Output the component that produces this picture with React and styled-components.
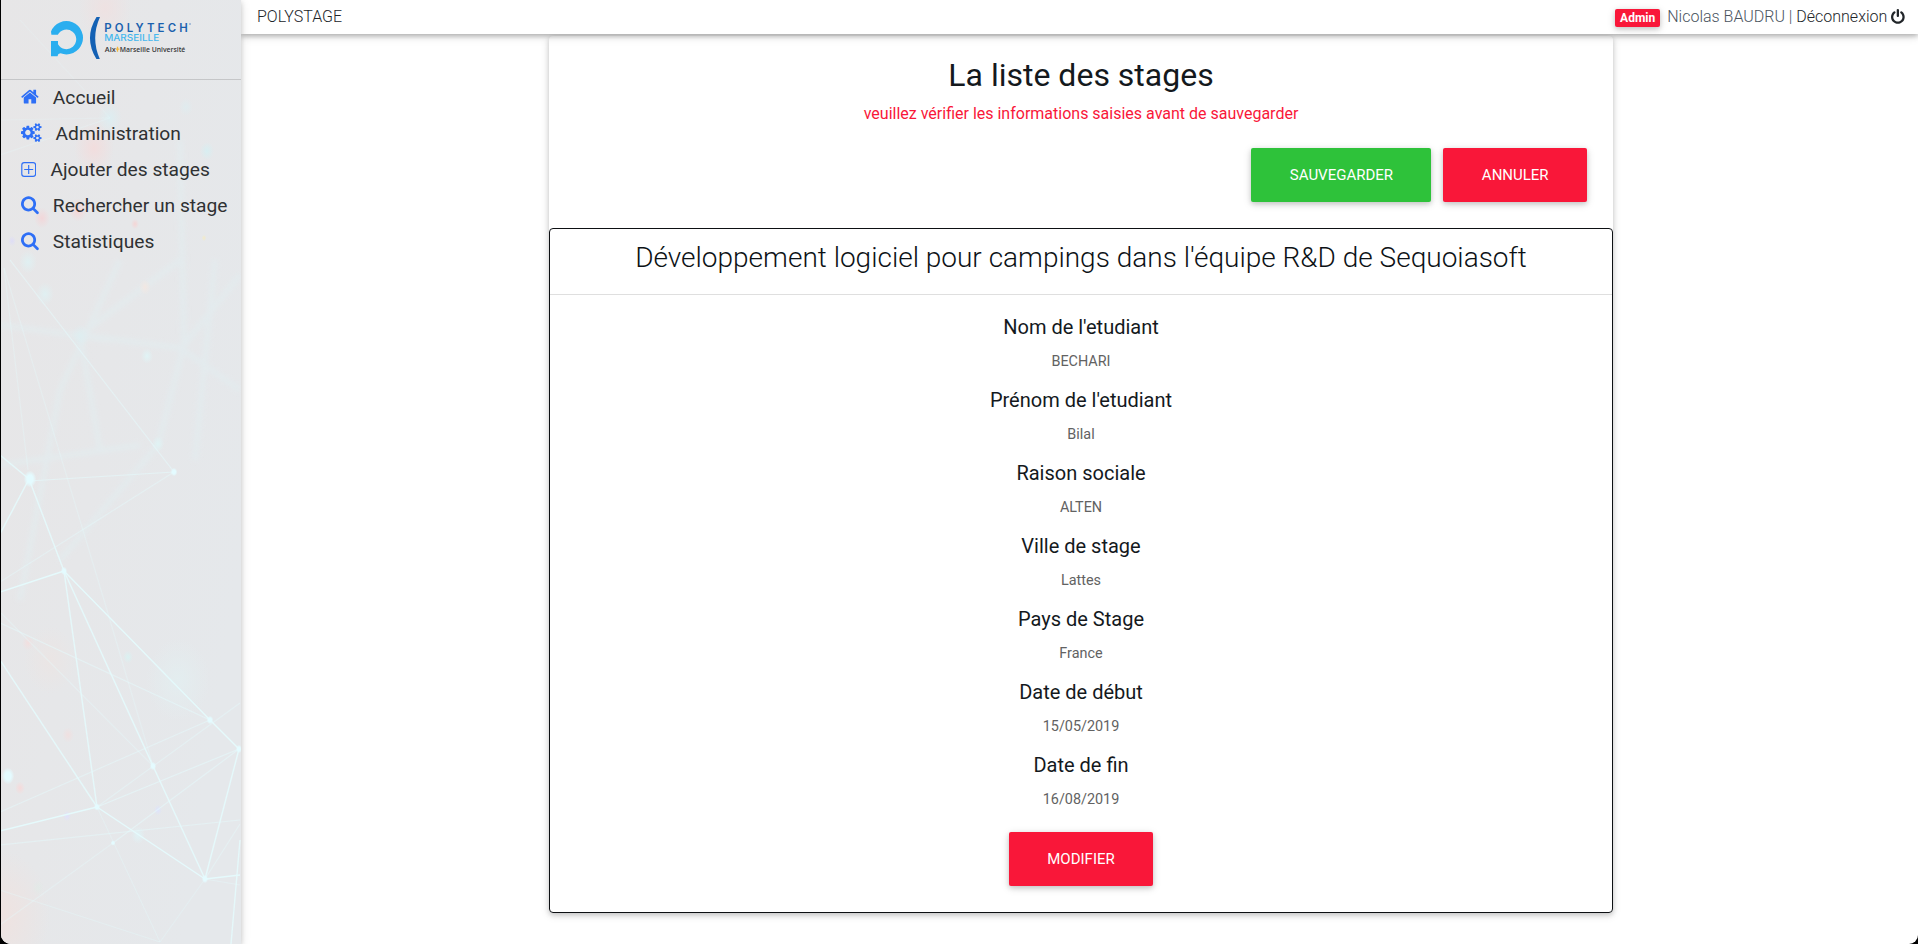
import React from "react";
import styled, { createGlobalStyle } from "styled-components";

const GlobalStyle = createGlobalStyle`
  *, *::before, *::after { box-sizing: border-box; }
  body {
    margin: 0;
    background: #000;
    font-family: Roboto, "Liberation Sans", sans-serif;
    font-weight: 300;
    color: #212529;
    overflow: hidden;
  }
`;

const Window = styled.div`
  display: flex;
  height: 944px;
  margin-left: 1px;
  background: #fff;
  border-radius: 0 0 9px 10px;
  overflow: hidden;
`;

const Sidebar = styled.aside`
  position: relative;
  z-index: 2;
  flex: 0 0 240px;
  background: #e6e7e9;
  box-shadow: 0 2px 5px rgba(0, 0, 0, 0.16), 0 2px 10px rgba(0, 0, 0, 0.12);
`;

const Backdrop = styled.svg`
  position: absolute;
  inset: 0;
  display: block;
`;

const LogoArea = styled.div`
  position: relative;
  height: 80px;
  padding: 17px 0 0 50px;
  border-bottom: 1px solid #c5c6c8;
`;

const Nav = styled.nav`
  position: relative;
  display: flex;
  flex-direction: column;
  margin-top: -1px;
`;

const NavItem = styled.a`
  display: flex;
  align-items: center;
  gap: 14px;
  height: 36px;
  padding-left: 20px;
  font-size: 19.2px;
  font-weight: 400;
  color: #2f3133;
  white-space: nowrap;
  svg { color: #2e6ff6; flex: none; }
`;

const Main = styled.div`
  flex: 1;
  display: flex;
  flex-direction: column;
  min-width: 0;
`;

const TopBar = styled.header`
  position: relative;
  z-index: 1;
  display: flex;
  flex: 0 0 34px;
  align-items: center;
  justify-content: space-between;
  padding: 0 13px 1px 16px;
  background: #fff;
  font-size: 16px;
  box-shadow: 0 2px 5px rgba(0, 0, 0, 0.26), 0 2px 10px rgba(0, 0, 0, 0.12);
`;

const Account = styled.div`
  display: flex;
  align-items: center;
  color: #4a545e;
  white-space: pre;
  svg { margin-left: 4px; color: #212529; }
`;

const Badge = styled.span`
  height: 18px;
  margin: 3px 7px 0 0;
  padding: 0 5px;
  border-radius: 2px;
  background: #f91739;
  color: #fff;
  font-size: 12px;
  font-weight: 700;
  line-height: 18px;
  box-shadow: 0 2px 5px rgba(0, 0, 0, 0.16), 0 2px 10px rgba(0, 0, 0, 0.12);
`;

const Logout = styled.a`
  color: #212529;
`;

const Card = styled.section`
  width: 1064px;
  margin: 2px 0 0 308px;
  border-radius: 4px;
  background: #fff;
  text-align: center;
  box-shadow: 0 2px 5px rgba(0, 0, 0, 0.16), 0 2px 10px rgba(0, 0, 0, 0.12);
`;

const Intro = styled.div`
  height: 192px;
  padding: 20px 20px 0;
`;

const Title = styled.h2`
  margin: 0 0 8px;
  font-size: 32px;
  font-weight: 400;
  line-height: 38px;
  color: #14191d;
`;

const Warning = styled.p`
  margin: 0;
  font-size: 16px;
  font-weight: 400;
  line-height: 24px;
  color: #f91739;
`;

const Actions = styled.div`
  display: flex;
  justify-content: flex-end;
  gap: 12px;
  padding: 22px 6px 0 0;
`;

const Button = styled.button`
  height: 54px;
  padding: 0 38.4px;
  border: 0;
  border-radius: 2px;
  background: ${(p) => (p.$tone === "success" ? "#2ec23a" : "#f91739")};
  color: #fff;
  font: 400 15px/22px Roboto, "Liberation Sans", sans-serif;
  text-transform: uppercase;
  box-shadow: 0 2px 5px rgba(0, 0, 0, 0.16), 0 2px 10px rgba(0, 0, 0, 0.12);
`;

const Internship = styled.article`
  height: 685px;
  border: 1px solid #0d1013;
  border-radius: 4px;
`;

const InternshipTitle = styled.h3`
  height: 66px;
  margin: 0 0 20px;
  padding-top: 12px;
  border-bottom: 1px solid #dfdfdf;
  font-size: 28px;
  font-weight: 300;
  line-height: 34px;
  color: #0d1216;
`;

const Fields = styled.dl`
  margin: 0;
  padding-bottom: 6px;
`;

const Label = styled.dt`
  margin-bottom: 8px;
  font-size: 20px;
  font-weight: 400;
  line-height: 24px;
  color: #14191d;
`;

const Value = styled.dd`
  margin: 0 0 11px;
  font-size: 14.4px;
  font-weight: 400;
  line-height: 30px;
  color: #626262;
`;

const FA = {
  home: {
    x: 64, w: 1664,
    d: "M1472 992v480q0 26-19 45t-45 19h-384v-384h-256v384h-384q-26 0-45-19t-19-45v-480q0-1 .5-3t.5-3l575-474 575 474q1 2 1 6zm223-69l-62 74q-8 9-21 11h-3q-13 0-21-7l-692-577-692 577q-12 8-24 7-13-2-21-11l-62-74q-8-10-7-23.5t11-21.5l719-599q32-26 76-26t76 26l244 204v-195q0-14 9-23t23-9h192q14 0 23 9t9 23v408l219 182q10 8 11 21.5t-7 23.5z",
  },
  cogs: {
    x: -64, w: 1920,
    d: "M832 896q0-106-75-181t-181-75-181 75-75 181 75 181 181 75 181-75 75-181zm768 512q0-52-38-90t-90-38-90 38-38 90q0 53 37.5 90.5t90.5 37.5 90.5-37.5 37.5-90.5zm0-1024q0-52-38-90t-90-38-90 38-38 90q0 53 37.5 90.5t90.5 37.5 90.5-37.5 37.5-90.5zm-384 421v185q0 10-7 19.5t-16 10.5l-155 24q-11 35-32 76 34 48 90 115 7 11 7 20 0 12-7 19-23 30-82.5 89.5t-78.5 59.5q-11 0-21-7l-115-90q-37 19-77 31-11 108-23 155-7 24-30 24h-186q-11 0-20-7.5t-10-17.5l-23-153q-34-10-75-31l-118 89q-7 7-20 7-11 0-21-8-144-133-144-160 0-9 7-19 10-14 41-53t47-61q-23-44-35-82l-152-24q-10-1-17-9.5t-7-19.5v-185q0-10 7-19.5t16-10.5l155-24q11-35 32-76-34-48-90-115-7-11-7-20 0-12 7-20 22-30 82-89t79-59q11 0 21 7l115 90q34-18 77-32 11-108 23-154 7-24 30-24h186q11 0 20 7.5t10 17.5l23 153q34 10 75 31l118-89q8-7 20-7 11 0 21 8 144 133 144 160 0 8-7 19-12 16-42 54t-45 60q23 48 34 82l152 23q10 2 17 10.5t7 19.5zm640 533v140q0 16-149 31-12 27-30 52 51 113 51 138 0 4-4 7-122 71-124 71-8 0-46-47t-52-68q-20 2-30 2t-30-2q-14 21-52 68t-46 47q-2 0-124-71-4-3-4-7 0-25 51-138-18-25-30-52-149-15-149-31v-140q0-16 149-31 13-29 30-52-51-113-51-138 0-4 4-7 4-2 35-20t59-34 30-16q8 0 46 46.5t52 67.5q20-2 30-2t30 2q51-71 92-112l6-2q4 0 124 70 4 3 4 7 0 25-51 138 17 23 30 52 149 15 149 31zm0-1024v140q0 16-149 31-12 27-30 52 51 113 51 138 0 4-4 7-122 71-124 71-8 0-46-47t-52-68q-20 2-30 2t-30-2q-14 21-52 68t-46 47q-2 0-124-71-4-3-4-7 0-25 51-138-18-25-30-52-149-15-149-31v-140q0-16 149-31 13-29 30-52-51-113-51-138 0-4 4-7 4-2 35-20t59-34 30-16q8 0 46 46.5t52 67.5q20-2 30-2t30 2q51-71 92-112l6-2q4 0 124 70 4 3 4 7 0 25-51 138 17 23 30 52 149 15 149 31z",
  },
  search: {
    x: 64, w: 1664,
    d: "M1216 832q0-185-131.5-316.5t-316.5-131.5-316.5 131.5-131.5 316.5 131.5 316.5 316.5 131.5 316.5-131.5 131.5-316.5zm512 832q0 52-38 90t-90 38q-54 0-90-38l-343-342q-179 124-399 124-143 0-273.5-55.5t-225-150-150-225-55.5-273.5 55.5-273.5 150-225 225-150 273.5-55.5 273.5 55.5 225 150 150 225 55.5 273.5q0 220-124 399l343 343q37 37 37 90z",
  },
  power: {
    x: 128, w: 1536,
    d: "M1664 896q0 156-61 298t-164 245-245 164-298 61-298-61-245-164-164-245-61-298q0-182 80.5-343t226.5-270q43-32 95.5-25t83.5 50q32 42 24.5 94.5t-49.5 84.5q-98 74-151.5 181t-53.5 228q0 104 40.5 198.5t109.5 163.5 163.5 109.5 198.5 40.5 198.5-40.5 163.5-109.5 109.5-163.5 40.5-198.5q0-121-53.5-228t-151.5-181q-42-32-49.5-84.5t24.5-94.5q31-43 84-50t95 25q146 109 226.5 270t80.5 343zm-640-768v640q0 52-38 90t-90 38-90-38-38-90v-640q0-52 38-90t90-38 90 38 38 90z",
  },
};

function Icon({ name, size = 19.2 }) {
  if (name === "plus") {
    return (
      <svg width="15.4" height="15" viewBox="0 0 15 15" fill="none" stroke="currentColor" strokeWidth="1.15">
        <rect x="0.6" y="0.6" width="13.8" height="13.8" rx="2.4" />
        <path d="M7.5 3v9M3 7.5h9" />
      </svg>
    );
  }
  const { x, w, d } = FA[name];
  return (
    <svg width={(w / 1792) * size} height={size} viewBox={`${x} 0 ${w} 1792`} fill="currentColor">
      <path d={d} />
    </svg>
  );
}

function Logo() {
  return (
    <svg width="144" height="44" viewBox="51 17 144 44">
      <path d="M51 31.5A16.6 16.6 0 1 1 60.5 53.3Q57.8 53.5 57.5 56.2L51 56.3V41H58V44.3A9.8 9.8 0 1 0 57.8 34.7H51.4Z" fill="#2aaeef" />
      <path d="M96.5 17H100Q90.5 38 99.8 59H96.4Q83.5 38 96.5 17Z" fill="#1461b4" />
      <text x="104.2" y="32" fontFamily="Inter, sans-serif" fontSize="11.4" fontWeight="600" fill="#1a61ae" textLength="83.5" lengthAdjust="spacing">POLYTECH</text>
      <circle cx="190" cy="24" r="0.8" fill="#5a8cc4" />
      <text x="104.2" y="41" fontFamily="Inter, sans-serif" fontSize="9" fontWeight="500" fill="#45b7ee" textLength="55" lengthAdjust="spacingAndGlyphs">MARSEILLE</text>
      <g fontFamily="Open Sans, sans-serif" fontSize="7.8" fontWeight="600" fill="#38383a">
        <text x="104.8" y="51.8" textLength="11" lengthAdjust="spacingAndGlyphs">Aix</text>
        <text x="119.8" y="51.8" textLength="65.5" lengthAdjust="spacingAndGlyphs">Marseille Université</text>
      </g>
      <path d="M117.5 46.7v5M115.8 49.2h3.5" stroke="#f4b63c" strokeWidth="1.3" />
    </svg>
  );
}

// Faint network artwork: soft glows, wide hazy beams, sharp links, then nodes.
const GLOWS = [
  [94, 148, 20, "#f3dcdc"], [78, 210, 9, "#f8d4d4"], [42, 218, 8, "#f3d5d8"], [135, 224, 4, "#f6d3d3"],
  [105, 8, 26, "#efe1e1"], [207, 151, 7, "#d6eff2"], [110, 118, 12, "#dceef2"], [186, 107, 7, "#dfecef"],
  [204, 238, 2.5, "#f4ebc4"], [12, 241, 4, "#dddcf8"], [145, 287, 6, "#f4e7e1"], [147, 356, 6, "#dff5f7"],
  [45, 294, 9, "#dff1f3"], [28, 262, 9, "#dff1f3"], [80, 336, 9, "#deeef1"], [158, 444, 6, "#dff4f5"],
  [28, 643, 6, "#f3dede"], [68, 735, 6, "#f1dfdf"], [20, 788, 5, "#f8d8d8"], [50, 660, 26, "#ebe5e4"],
  [128, 657, 5, "#d8f2f2"], [158, 810, 4, "#dce2ff"], [67, 816, 4, "#dfe0ff"], [38, 888, 6, "#e0ebe8"],
  [0, 915, 50, "#f0e2df"], [178, 680, 32, "#e3eef0"], [138, 835, 7, "#dff4f7"],
];
const BEAMS = [
  [120, 260, 60, 390], [60, 390, 20, 600], [180, 140, 184, 345], [240, 275, 180, 350], [184, 345, 158, 445],
  [158, 445, 60, 560], [80, 335, 180, 348], [80, 335, 180, 260], [80, 335, 100, 450], [0, 325, 110, 340],
  [180, 348, 240, 390], [215, 260, 195, 460], [0, 465, 140, 445],
];
const LINKS = [
  [10, 260, 174, 472, 0.6], [4, 268, 28, 470, 0.35], [4, 268, 104, 600, 0.35], [104, 600, 153, 766, 0.35],
  [0, 455, 29, 479, 0.9], [29, 479, 0, 534, 0.9], [29, 479, 64, 571, 0.9], [29, 481, 174, 472, 0.6],
  [0, 582, 174, 472, 0.45], [0, 592, 64, 571, 1], [64, 571, 97, 807, 0.9], [64, 571, 153, 766, 0.95],
  [64, 571, 210, 720, 1], [210, 720, 239, 749, 1], [0, 623, 210, 720, 0.55], [0, 612, 153, 766, 0.4],
  [0, 660, 97, 807, 0.9], [0, 812, 210, 720, 0.5], [97, 807, 240, 703, 0.45], [97, 807, 239, 749, 0.6],
  [0, 831, 97, 807, 1], [97, 807, 205, 879, 1], [153, 766, 205, 879, 0.95], [239, 749, 205, 879, 0.95],
  [113, 843, 239, 749, 0.55], [0, 845, 240, 820, 0.5], [0, 925, 113, 843, 0.35], [97, 807, 160, 942, 0.35],
  [205, 879, 160, 942, 0.35], [0, 890, 160, 942, 0.35], [205, 879, 240, 875, 1], [205, 879, 240, 885, 0.4],
  [205, 879, 240, 824, 0.45], [240, 840, 231, 944, 0.9], [0, 155, 110, 118, 0.25], [0, 120, 110, 118, 0.2],
  [20, 20, 110, 118, 0.2],
];
const NODES = [
  [30, 479, 6, 8], [174, 472, 3.2, 4], [64, 571, 3, 4], [8, 776, 6, 8], [210, 720, 3.2, 4], [239, 749, 3, 4],
  [153, 766, 3, 4], [97, 807, 3, 3.5], [113, 843, 2.2, 2.4], [205, 879, 3, 4],
];

function NetworkArt() {
  return (
    <Backdrop width="240" height="944" viewBox="1 0 240 944">
      <defs>
        <linearGradient id="base" x1="0" x2="1" y1="0" y2="0.6">
          <stop offset="0" stopColor="#e7e6e7" />
          <stop offset="1" stopColor="#e5e8eb" />
        </linearGradient>
        {GLOWS.map(([, , , color], i) => (
          <radialGradient id={`glow${i}`} key={i}>
            <stop offset="0" stopColor={color} stopOpacity="0.9" />
            <stop offset="1" stopColor={color} stopOpacity="0" />
          </radialGradient>
        ))}
        <radialGradient id="node">
          <stop offset="0.5" stopColor="#e4fbff" />
          <stop offset="1" stopColor="#e4fbff" stopOpacity="0.15" />
        </radialGradient>
        <filter id="soft" x="-20%" y="-20%" width="140%" height="140%">
          <feGaussianBlur stdDeviation="2.5" />
        </filter>
      </defs>
      <rect width="241" height="944" fill="url(#base)" />
      <g filter="url(#soft)" stroke="#e2eef1" strokeWidth="5" opacity="0.6">
        {BEAMS.map(([x1, y1, x2, y2], i) => <line key={i} x1={x1} y1={y1} x2={x2} y2={y2} />)}
      </g>
      {GLOWS.map(([x, y, r], i) => <ellipse key={i} cx={x} cy={y} rx={r} ry={r * 1.3} fill={`url(#glow${i})`} />)}
      <g stroke="#e5fafc">
        {LINKS.map(([x1, y1, x2, y2, o], i) => (
          <line key={i} x1={x1} y1={y1} x2={x2} y2={y2} opacity={o} strokeWidth={o > 0.8 ? 1.4 : 1.1} />
        ))}
      </g>
      {NODES.map(([x, y, rx, ry], i) => <ellipse key={i} cx={x} cy={y} rx={rx} ry={ry} fill="url(#node)" />)}
    </Backdrop>
  );
}

const MENU = [
  ["home", "Accueil"],
  ["cogs", "Administration"],
  ["plus", "Ajouter des stages"],
  ["search", "Rechercher un stage"],
  ["search", "Statistiques"],
];

const DETAILS = [
  ["Nom de l'etudiant", "BECHARI"],
  ["Prénom de l'etudiant", "Bilal"],
  ["Raison sociale", "ALTEN"],
  ["Ville de stage", "Lattes"],
  ["Pays de Stage", "France"],
  ["Date de début", "15/05/2019"],
  ["Date de fin", "16/08/2019"],
];

export default function App() {
  return (
    <>
      <GlobalStyle />
      <Window>
        <Sidebar>
          <NetworkArt />
          <LogoArea><Logo /></LogoArea>
          <Nav>
            {MENU.map(([icon, text]) => (
              <NavItem key={text}><Icon name={icon} />{text}</NavItem>
            ))}
          </Nav>
        </Sidebar>
        <Main>
          <TopBar>
            <span>POLYSTAGE</span>
            <Account>
              <Badge>Admin</Badge>
              <span>Nicolas BAUDRU | </span>
              <Logout>Déconnexion</Logout>
              <Icon name="power" size={16} />
            </Account>
          </TopBar>
          <Card>
            <Intro>
              <Title>La liste des stages</Title>
              <Warning>veuillez vérifier les informations saisies avant de sauvegarder</Warning>
              <Actions>
                <Button $tone="success">Sauvegarder</Button>
                <Button $tone="danger">Annuler</Button>
              </Actions>
            </Intro>
            <Internship>
              <InternshipTitle>Développement logiciel pour campings dans l'équipe R&amp;D de Sequoiasoft</InternshipTitle>
              <Fields>
                {DETAILS.map(([label, value]) => (
                  <React.Fragment key={label}>
                    <Label>{label}</Label>
                    <Value>{value}</Value>
                  </React.Fragment>
                ))}
              </Fields>
              <Button $tone="danger">Modifier</Button>
            </Internship>
          </Card>
        </Main>
      </Window>
    </>
  );
}
